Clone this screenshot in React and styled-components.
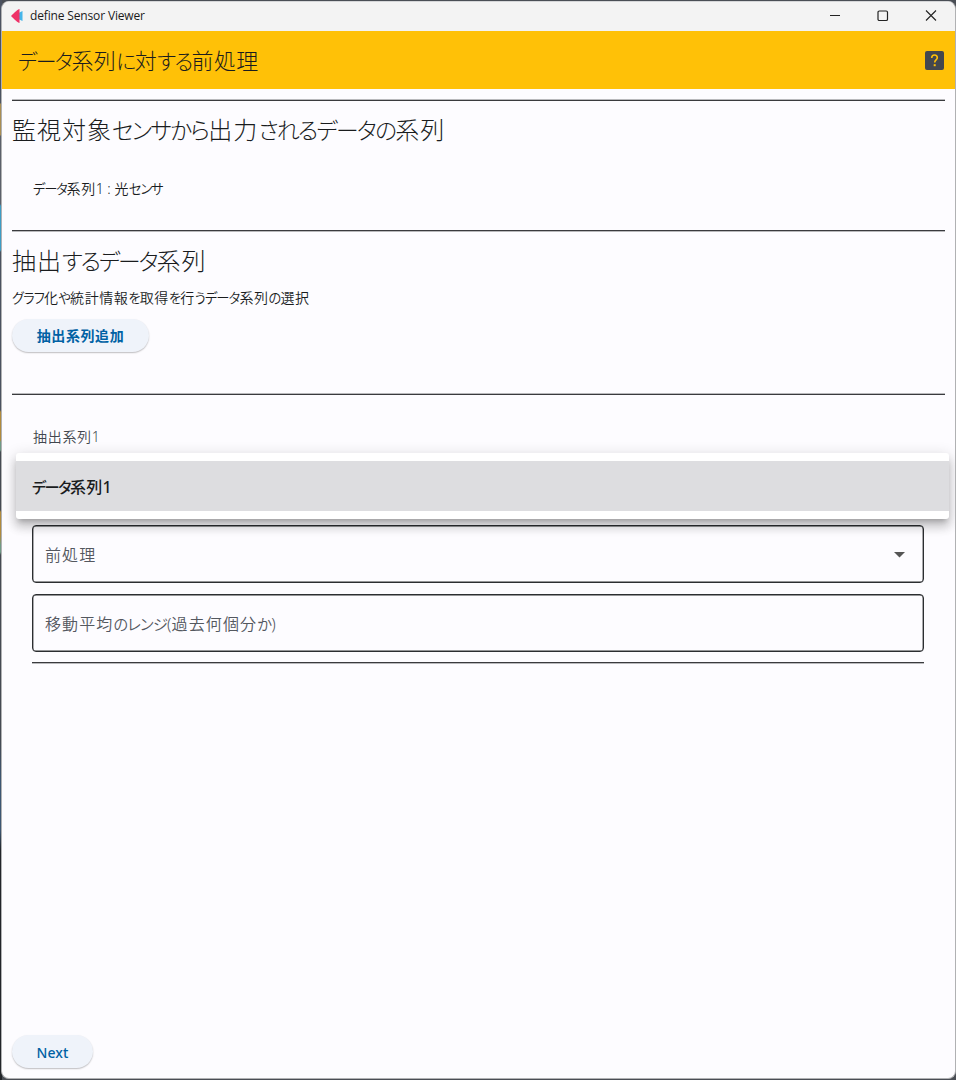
import React from "react";
import styled, { createGlobalStyle } from "styled-components";

const Global = createGlobalStyle`
  * { box-sizing: border-box; }
  body { margin: 0; background: #3f444a; }
`;

const jp = `"Noto Sans", "Noto Sans CJK JP", sans-serif`;

const Desktop = styled.div`
  height: 1080px;
  padding: 1px 0 1px 1px;
  overflow: hidden;
  font-family: ${jp};
  background:
    linear-gradient(#4b5260 0 90px, #4d5563 103px, #a98d52 104px 135px, #5b606a 136px 204px, #3d9cc4 206px 250px, #4b5260 252px 410px, #b08a3c 412px 440px, #6f9a86 442px 450px, #454a52 452px 510px, #b08a3c 512px 535px, #6f9a86 545px 552px, #454a52 555px 740px, #3d5672 780px 830px, #22252a 850px 1080px) left / 2px 100% no-repeat,
    #4a4e55;
`;

const Window = styled.div`
  height: 1078px;
  display: flex;
  flex-direction: column;
  border: 1px solid #b0b1b3;
  border-top-color: #d5d6d8;
  border-radius: 8px;
  overflow: hidden;
  background: #fdfcff;
`;

const TitleBar = styled.div`
  height: 29px;
  flex: none;
  display: flex;
  align-items: center;
  padding: 0 18px 2px 8px;
  background: #f3f3f3;
`;

const TitleText = styled.span`
  flex: 1;
  margin-left: 6px;
  font-family: "Open Sans", "Noto Sans", sans-serif;
  font-size: 12px;
  letter-spacing: -0.15px;
  color: #1b1b1b;
`;

const Controls = styled.div`
  display: flex;
  align-items: center;
  gap: 36px;
  svg { display: block; }
`;

const AppBar = styled.header`
  height: 58px;
  flex: none;
  display: flex;
  align-items: center;
  justify-content: space-between;
  padding: 0 11px 0 16px;
  background: #ffc107;
`;

const Content = styled.main`
  flex: 1;
  display: flex;
  flex-direction: column;
  align-items: flex-start;
  padding: 11px 10px 10px;
`;

const Divider = styled.hr`
  width: 100%;
  height: 1px;
  flex: none;
  margin: 0;
  border: 0;
  background: #3a3b3e;
  box-shadow: 0 ${(p) => p.$soft || -1}px rgba(58, 59, 62, 0.35);
`;

const Kana = styled.span`
  font-size: 0.95em;
`;

const Latin = styled.span`
  letter-spacing: 0;
`;

const Label = styled.div`
  flex: none;
  height: ${(p) => p.$h}px;
  line-height: ${(p) => p.$h}px;
  margin: ${(p) => p.$m || "0"};
  font-size: ${(p) => p.$size}px;
  font-weight: ${(p) => p.$weight || 300};
  letter-spacing: ${(p) => p.$ls ?? 0.04}em;
  font-feature-settings: "palt";
  white-space: nowrap;
  color: ${(p) => p.$color || "#1a1c1e"};

  ${Kana} {
    letter-spacing: ${(p) => p.$kana ?? -0.077}em;
  }
`;

// Kana is set tighter than kanji, Latin keeps its natural spacing.
function Mixed({ children }) {
  return children
    .split(/([\u3040-\u30ff]+|[ -~]+)/)
    .filter(Boolean)
    .map((run, i) => {
      if (/^[\u3040-\u30ff]/.test(run)) return <Kana key={i}>{run}</Kana>;
      if (/^[ -~]/.test(run)) return <Latin key={i}>{run}</Latin>;
      return <React.Fragment key={i}>{run}</React.Fragment>;
    });
}

const Pill = styled.button`
  height: 33px;
  flex: none;
  width: ${(p) => p.$w}px;
  padding: 0;
  border: 0;
  border-radius: 17px;
  background: #eff3fa;
  color: #0061a4;
  font-family: ${jp};
  font-size: 14px;
  font-weight: ${(p) => p.$weight || 500};
  letter-spacing: ${(p) => p.$ls}px;
  line-height: ${(p) => p.$lh || 33}px;
  box-shadow: 0 1px 1.5px rgba(0, 0, 0, 0.25);
`;

const Series = styled.section`
  position: relative;
  align-self: stretch;
  display: flex;
  flex-direction: column;
  padding: 32px 21px 0 20px;
`;

const Field = styled.div`
  height: 58px;
  flex: none;
  display: flex;
  align-items: center;
  justify-content: space-between;
  margin-bottom: ${(p) => p.$mb}px;
  padding: 1px 18px 0 12px;
  border: 1px solid #2c2e31;
  border-radius: 4px;
  box-shadow: inset 0 0 0 0.4px #2c2e31;
`;

const Menu = styled.div`
  position: absolute;
  top: 58px;
  left: 4px;
  right: -4px;
  padding: 8px 0;
  border-radius: 3px;
  background: #fff;
  box-shadow: 0 5px 5px -3px rgba(0, 0, 0, 0.2), 0 8px 10px 1px rgba(0, 0, 0, 0.14), 0 3px 14px 2px rgba(0, 0, 0, 0.12);
`;

const MenuItem = styled.div`
  height: 50px;
  padding: 1px 0 0 16px;
  background: #dddde0;
`;

const Spacer = styled.div`
  flex: 1;
`;

export default function App() {
  return (
    <Desktop>
      <Global />
      <Window>
        <TitleBar>
          <svg width="14" height="16" viewBox="0 0 14 16">
            <path d="M7 5.800 12.500 3v10L7 10.500z" fill="#45b5ea" />
            <path d="M9.500 1v14C7.500 14.400 5.200 12.200 1 8 5.200 3.800 7.500 1.600 9.500 1z" fill="#ee3167" />
          </svg>
          <TitleText>define Sensor Viewer</TitleText>
          <Controls>
            <svg width="12" height="12" viewBox="0 0 12 12"><path d="M1 5.500h10" stroke="#222" fill="none" /></svg>
            <svg width="12" height="12" viewBox="0 0 12 12"><rect x="1" y="1" width="9.500" height="9.500" rx="1.300" stroke="#222" strokeWidth="1.200" fill="none" /></svg>
            <svg width="12" height="12" viewBox="0 0 12 12"><path d="M1 .5l10 10M11 .5 1 10.500" stroke="#222" strokeWidth="1.100" fill="none" /></svg>
          </Controls>
        </TitleBar>
        <AppBar>
          <Label $h={56} $size={22} $ls={0.02} $kana={-0.08}><Mixed>データ系列に対する前処理</Mixed></Label>
          <svg width="19" height="19" viewBox="0 0 19 19">
            <rect width="19" height="19" rx="2" fill="#43474e" />
            <path d="M6.700 7.100C6.700 4.900 8 4 9.500 4s2.800 1 2.800 2.700c0 2.100-2.600 2.300-2.600 4.700" fill="none" stroke="#ffc107" strokeWidth="1.600" />
            <rect x="8.700" y="13.200" width="2" height="2" fill="#ffc107" />
          </svg>
        </AppBar>
        <Content>
          <Divider />
          <Label $h={40} $m="9px 0 0 0" $size={24}><Mixed>監視対象センサから出力されるデータの系列</Mixed></Label>
          <Label $h={20} $m="29px 0 31px 21px" $size={14} $weight={350} $kana={-0.09}><Mixed>データ系列1 : 光センサ</Mixed></Label>
          <Divider $soft={1} />
          <Label $h={40} $m="10px 0 0 0" $size={24} $kana={-0.09}><Mixed>抽出するデータ系列</Mixed></Label>
          <Label $h={20} $m="7px 0 11px 0" $size={14} $weight={350} $kana={-0.068}><Mixed>グラフ化や統計情報を取得を行うデータ系列の選択</Mixed></Label>
          <Pill $w={137} $weight={700} $ls={0.6}>抽出系列追加</Pill>
          <Label $h={42} $size={14} />
          <Divider />
          <Series>
            <Label $h={20} $m="0 0 78px 1px" $size={14} $weight={350} $ls={0.05} $color="#43474e"><Mixed>抽出系列1</Mixed></Label>
            <Field $mb={11}>
              <Label $h={56} $size={16} $weight={350} $ls={0.07} $color="#54585f"><Mixed>前処理</Mixed></Label>
              <svg width="11" height="6" viewBox="0 0 11 6"><path d="M0 0h11L5.500 5.500z" fill="#555" /></svg>
            </Field>
            <Field $mb={10}>
              <Label $h={56} $size={16} $weight={350} $ls={0.07} $kana={-0.045} $color="#54585f"><Mixed>移動平均のレンジ(過去何個分か)</Mixed></Label>
            </Field>
            <Divider $soft={1} />
            <Menu>
              <MenuItem><Label $h={50} $size={16} $weight={500} $ls={0.02} $kana={-0.1}><Mixed>データ系列1</Mixed></Label></MenuItem>
            </Menu>
          </Series>
          <Spacer />
          <Pill $w={81} $weight={500} $ls={0.1} $lh={35}>Next</Pill>
        </Content>
      </Window>
    </Desktop>
  );
}
